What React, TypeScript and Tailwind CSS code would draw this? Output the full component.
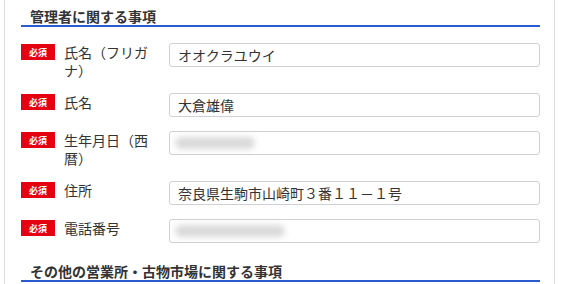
import React from "react";

type Row = {
  label: string;
  value?: string;
  blurWidth?: number;
};

const rows: Row[] = [
  { label: "氏名（フリガナ）", value: "オオクラユウイ" },
  { label: "氏名", value: "大倉雄偉" },
  { label: "生年月日（西暦）", blurWidth: 80 },
  { label: "住所", value: "奈良県生駒市山崎町３番１１－１号" },
  { label: "電話番号", blurWidth: 110 },
];

function SectionTitle({ children }: { children: React.ReactNode }) {
  return (
    <div className="border-b-2 border-[#2a5bd0] pt-[7px] pl-[9px]">
      <h2 className="text-[14px] leading-[18px] font-bold text-[#333]">{children}</h2>
    </div>
  );
}

function FormRow({ row }: { row: Row }) {
  return (
    <div className="flex items-start mb-[14px]">
      <span className="mt-[1px] flex h-[16px] w-[34px] shrink-0 items-center justify-center bg-[#e50012] text-[9px] font-bold leading-none text-white">
        必須
      </span>
      <label className="ml-[9px] w-[90px] shrink-0 text-[14px] leading-[18px] text-[#333]">
        {row.label}
      </label>
      <div className="ml-[15px] flex h-[24px] flex-1 items-center rounded-[3px] border border-[#cfcfd4] bg-white px-[8px]">
        {row.value ? (
          <span className="text-[14px] leading-none text-[#333]">{row.value}</span>
        ) : (
          <span
            className="-ml-[3px] block h-[12px] rounded-full bg-[#d9d9d9] blur-[3px]"
            style={{ width: row.blurWidth }}
          />
        )}
      </div>
    </div>
  );
}

export default function App() {
  return (
    <div
      className="h-[284px] w-[562px] overflow-hidden bg-white"
      style={{ fontFamily: '"Noto Sans CJK JP", "Noto Sans", sans-serif' }}
    >
      <div className="ml-[4px] h-full w-[551px] border-x border-[#dcdce0] pl-[16px] pr-[14px]">
        <SectionTitle>管理者に関する事項</SectionTitle>
        <div className="pt-[16px]">
          {rows.map((r) => (
            <FormRow key={r.label} row={r} />
          ))}
        </div>
        <div className="-mt-[2px]">
          <SectionTitle>その他の営業所・古物市場に関する事項</SectionTitle>
        </div>
      </div>
    </div>
  );
}
